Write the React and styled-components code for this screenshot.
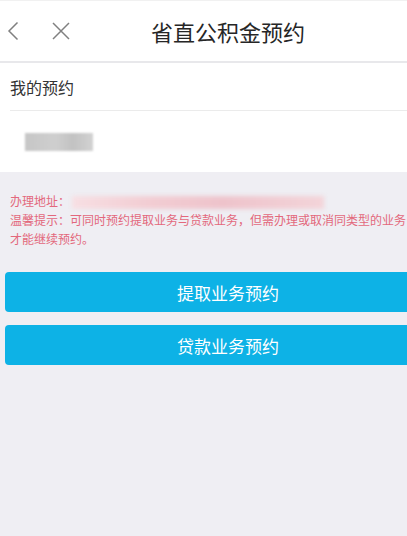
import React from 'react'
import styled, { createGlobalStyle } from 'styled-components'

const GlobalStyle = createGlobalStyle`
  html, body {
    margin: 0;
    padding: 0;
    overflow: hidden;
    background: #efeef3;
    font-family: "Noto Sans CJK SC", "Noto Sans", sans-serif;
  }
`

const Page = styled.div`
  width: 456px;
  min-height: 536px;
  background: #efeef3;
`

const Header = styled.div`
  display: flex;
  align-items: center;
  position: relative;
  height: 60px;
  background: #fff;
  border-top: 1px solid #f1f1f1;
  border-bottom: 2px solid #e8e8eb;
`

const IconButton = styled.div`
  display: flex;
  align-items: center;
  justify-content: center;
  width: ${p => p.w}px;
  height: 60px;
  margin-left: ${p => p.ml}px;
`

const Title = styled.div`
  position: absolute;
  left: 0;
  right: 0;
  text-align: center;
  font-size: 22px;
  color: #262626;
  pointer-events: none;
`

const Card = styled.div`
  background: #fff;
`

const Row = styled.div`
  display: flex;
  align-items: center;
  height: ${p => p.h}px;
  padding-left: ${p => p.pl}px;
  font-size: 16px;
  color: #333;
`

const Divider = styled.div`
  height: 1px;
  margin-left: 10px;
  background: #ebebeb;
`

const Blur = styled.div`
  width: 68px;
  height: 18px;
  background: linear-gradient(90deg, #c6c6c6 0%, #cfcfcf 45%, #c2c2c2 70%, #d2d2d2 100%);
  filter: blur(1px);
`

const Notice = styled.div`
  width: 397px;
  padding: 19px 0 0 10px;
  font-size: 12px;
  line-height: 19px;
  color: #e3687c;
`

const Smudge = styled.span`
  display: inline-block;
  vertical-align: middle;
  width: 252px;
  height: 13px;
  margin-left: 2px;
  background: linear-gradient(90deg, #f7dfe3 0%, #f2cdd3 30%, #eec3cb 60%, #f3d4d9 100%);
  filter: blur(2px);
`

const Buttons = styled.div`
  display: flex;
  flex-direction: column;
  gap: 13px;
  padding: 24px 5px 0 5px;
`

const Button = styled.div`
  display: flex;
  align-items: center;
  justify-content: center;
  height: 40px;
  border-radius: 4px;
  background: #0db2e6;
  color: #fff;
  font-size: 17px;
`

export default function App() {
  return (
    <Page>
      <GlobalStyle />
      <Header>
        <IconButton w={14} ml={6}>
          <svg width="12" height="20" viewBox="0 0 12 20">
            <path d="M10.5 1.5 L2 10 L10.5 18.5" fill="none" stroke="#808080" strokeWidth="1.5" />
          </svg>
        </IconButton>
        <IconButton w={20} ml={31}>
          <svg width="18" height="18" viewBox="0 0 18 18">
            <path d="M1 1 L17 17 M17 1 L1 17" fill="none" stroke="#808080" strokeWidth="1.5" />
          </svg>
        </IconButton>
        <Title>省直公积金预约</Title>
      </Header>
      <Card>
        <Row h={47} pl={10}>我的预约</Row>
        <Divider />
        <Row h={61} pl={25}>
          <Blur />
        </Row>
      </Card>
      <Notice>
        <div>
          办理地址：<Smudge />
        </div>
        <div>温馨提示：可同时预约提取业务与贷款业务，但需办理或取消同类型的业务才能继续预约。</div>
      </Notice>
      <Buttons>
        <Button>提取业务预约</Button>
        <Button>贷款业务预约</Button>
      </Buttons>
    </Page>
  )
}
